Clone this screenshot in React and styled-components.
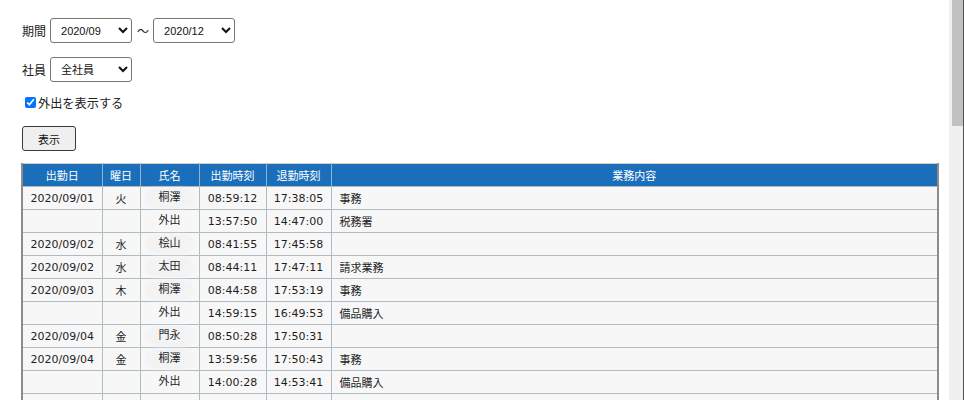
import React from 'react';
import styled, { createGlobalStyle } from 'styled-components';

const GlobalStyle = createGlobalStyle`
  html, body {
    margin: 0;
    padding: 0;
    overflow: hidden;
    background: #fff;
  }
  body {
    font-family: "DejaVu Sans", "Noto Sans CJK JP", sans-serif;
    color: #222;
  }
`;

const Page = styled.div`
  display: flex;
  width: 964px;
  height: 400px;
  overflow: hidden;
`;

const Main = styled.main`
  width: 949px;
  padding: 18px 0 0 21px;
  box-sizing: border-box;
`;

const ScrollTrack = styled.div`
  width: 14px;
  height: 400px;
  background: #f0f0f0;
  border-right: 1px solid #505050;
  display: flex;
  justify-content: flex-end;
`;

const ScrollThumb = styled.div`
  width: 11px;
  height: 126px;
  background: #c1c1c1;
`;

const FormRow = styled.div`
  display: flex;
  align-items: center;
  height: 25px;
  margin-bottom: ${({ $gap }) => $gap}px;
`;

const Label = styled.span`
  font-family: "Noto Sans CJK JP", sans-serif;
  font-size: 12px;
  margin-left: 1px;
  margin-right: 4px;
`;

const Tilde = styled.span`
  font-family: "Noto Sans CJK JP", sans-serif;
  font-size: 12px;
  margin: 0 4px 0 5px;
`;

const Select = styled.select`
  width: 82px;
  height: 25px;
  border: 1px solid #767676;
  border-radius: 3px;
  background: #fff;
  font-family: "Liberation Sans", "Noto Sans CJK JP", sans-serif;
  font-size: 11px;
  color: #111;
  padding: 0 0 0 6px;
  box-sizing: border-box;
`;

const CheckRow = styled.label`
  display: flex;
  align-items: center;
  height: 15px;
  margin: 13px 0 16px 0;
  font-family: "Noto Sans CJK JP", sans-serif;
  font-size: 12.2px;
`;

const Check = styled.input`
  width: 11px;
  height: 11px;
  margin: 0 2px 0 4px;
`;

const ShowButton = styled.button`
  width: 54px;
  height: 25px;
  margin-left: 1px;
  border: 1px solid #3a3a3a;
  border-radius: 3px;
  background: #efefef;
  font-family: "Noto Sans CJK JP", sans-serif;
  font-size: 11px;
  color: #111;
  padding: 0;
`;

const Table = styled.table`
  margin-top: 12px;
  width: 918px;
  border-collapse: collapse;
  table-layout: fixed;
  border-top: 1px solid #d6cfc6;
  border-left: 2px solid #8c8c8c;
  border-right: 2px solid #8c8c8c;
  font-size: 11px;
`;

const Th = styled.th`
  height: 22px;
  padding: 0;
  background: #1b6fba;
  color: #fff;
  font-weight: normal;
  text-align: center;
  border-left: 1px solid #8fb3d3;
  border-bottom: 1px solid #a9b8c1;
  &:first-child {
    border-left: none;
  }
`;

const Td = styled.td`
  height: 22px;
  padding: 0 ${({ $left }) => ($left ? '8px' : '0')};
  background: #f7f7f7;
  color: #1e1e1e;
  text-align: ${({ $left }) => ($left ? 'left' : 'center')};
  border: 1px solid #aebbc3;
  border-top: none;
  white-space: nowrap;
  &:first-child {
    border-left: none;
  }
  &:last-child {
    border-right: none;
  }
`;

const NameTag = styled.span`
  display: inline-block;
  padding: 0 12px;
  border-radius: 10px;
  background: ${({ $sub }) => ($sub ? 'transparent' : '#f3f3f3')};
  box-shadow: ${({ $sub }) => ($sub ? 'none' : '0 0 3px 1px #f3f3f3')};
  line-height: 18px;
`;

const cols = [80, 38, 59, 67, 65, null];
const headers = ['出勤日', '曜日', '氏名', '出勤時刻', '退勤時刻', '業務内容'];

const rows = [
  ['2020/09/01', '火', '桐澤', '08:59:12', '17:38:05', '事務'],
  ['', '', '外出', '13:57:50', '14:47:00', '税務署'],
  ['2020/09/02', '水', '桧山', '08:41:55', '17:45:58', ''],
  ['2020/09/02', '水', '太田', '08:44:11', '17:47:11', '請求業務'],
  ['2020/09/03', '木', '桐澤', '08:44:58', '17:53:19', '事務'],
  ['', '', '外出', '14:59:15', '16:49:53', '備品購入'],
  ['2020/09/04', '金', '門永', '08:50:28', '17:50:31', ''],
  ['2020/09/04', '金', '桐澤', '13:59:56', '17:50:43', '事務'],
  ['', '', '外出', '14:00:28', '14:53:41', '備品購入'],
  ['', '', '', '', '', ''],
];

export default function App() {
  return (
    <>
      <GlobalStyle />
      <Page>
        <Main>
          <FormRow $gap={14}>
            <Label>期間</Label>
            <Select defaultValue="2020/09">
              <option>2020/09</option>
            </Select>
            <Tilde>〜</Tilde>
            <Select defaultValue="2020/12">
              <option>2020/12</option>
            </Select>
          </FormRow>
          <FormRow $gap={0}>
            <Label>社員</Label>
            <Select defaultValue="全社員">
              <option>全社員</option>
            </Select>
          </FormRow>
          <CheckRow>
            <Check type="checkbox" defaultChecked />
            外出を表示する
          </CheckRow>
          <ShowButton>表示</ShowButton>
          <Table>
            <colgroup>
              {cols.map((w, i) => (
                <col key={i} style={w ? { width: w } : undefined} />
              ))}
            </colgroup>
            <thead>
              <tr>
                {headers.map((h) => (
                  <Th key={h}>{h}</Th>
                ))}
              </tr>
            </thead>
            <tbody>
              {rows.map((r, i) => (
                <tr key={i}>
                  <Td>{r[0]}</Td>
                  <Td>{r[1]}</Td>
                  <Td>
                    {r[2] && <NameTag $sub={r[2] === '外出'}>{r[2]}</NameTag>}
                  </Td>
                  <Td>{r[3]}</Td>
                  <Td>{r[4]}</Td>
                  <Td $left>{r[5]}</Td>
                </tr>
              ))}
            </tbody>
          </Table>
        </Main>
        <ScrollTrack>
          <ScrollThumb />
        </ScrollTrack>
      </Page>
    </>
  );
}
